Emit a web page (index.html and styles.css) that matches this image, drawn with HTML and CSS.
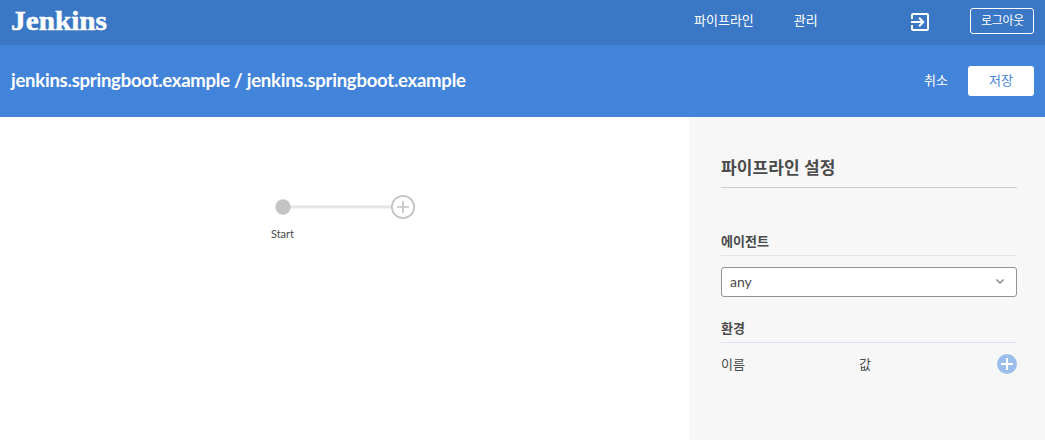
FILE: index.html
```html
<!DOCTYPE html>
<html lang="ko">
<head>
<meta charset="utf-8">
<title>Jenkins</title>
<link rel="stylesheet" href="styles.css">
</head>
<body>
<header class="topbar">
  <svg class="logo" width="100" height="34" viewBox="0 0 100 34" role="img" aria-label="Jenkins"><text x="0" y="22" textLength="96" lengthAdjust="spacingAndGlyphs">Jenkins</text></svg>
  <nav class="nav"><a>파이프라인</a><a>관리</a></nav>
  <svg class="exit" width="18" height="18" viewBox="0 0 18 18" fill="none" stroke="#fff" stroke-width="2"><path d="M1 6V2Q1 1 2 1H16Q17 1 17 2V16Q17 17 16 17H2Q1 17 1 16V12M0 9H12M8.1 4.8L12.3 9L8.1 13.2"/></svg>
  <button class="logout">로그아웃</button>
</header>
<section class="titlebar">
  <h1 class="title">jenkins.springboot.example / jenkins.springboot.example</h1>
  <a class="cancel">취소</a>
  <button class="save">저장</button>
</section>
<main class="editor">
  <section class="graph">
    <svg width="160" height="70" viewBox="0 0 160 70">
      <path d="M23 27H131" stroke="#e5e5e5" stroke-width="3"/>
      <circle cx="23" cy="27" r="7.7" fill="#c4c4c4"/>
      <circle cx="143" cy="27" r="11.1" fill="#fff" stroke="#c4c4c4" stroke-width="1.8"/>
      <path d="M137 27H149M143 21V33" stroke="#c4c4c4" stroke-width="1.7"/>
      <text class="stage" x="22.5" y="58" text-anchor="middle">Start</text>
    </svg>
  </section>
  <aside class="panel">
    <h2 class="heading">파이프라인 설정</h2>
    <h3 class="label agent">에이전트</h3>
    <div class="select"><span>any</span><svg width="10" height="8" viewBox="0 0 10 8" fill="none" stroke="#888" stroke-width="1.4"><path d="M1.3 1.5L5 5.1L8.7 1.5"/></svg></div>
    <h3 class="label env">환경</h3>
    <div class="columns"><span>이름</span><span>값</span>
      <svg width="20" height="20" viewBox="0 0 20 20"><circle cx="10" cy="10" r="10" fill="#9bbfea"/><path d="M4 10H16M10 4V16" stroke="#fff" stroke-width="2"/></svg>
    </div>
  </aside>
</main>
</body>
</html>
```
FILE: styles.css
```css
* { box-sizing: border-box; }
body { margin: 0; height: 440px; overflow: hidden; display: flex; flex-direction: column; background: #fff; color: #4a4a4a; font: 13px/20px Lato, "Noto Sans CJK KR", sans-serif; }
h1, h2, h3 { margin: 0; }
button { font: inherit; padding: 0; border-radius: 3px; }
.topbar { display: flex; height: 45px; padding: 8px 11px 0; background: #3a77c5; color: #fff; }
.logo { flex: none; overflow: visible; }
.logo text { font: bold 27px "Liberation Serif", serif; fill: #fff; stroke: #fff; stroke-width: .5px; }
.nav { display: flex; gap: 40px; margin: 2px 0 0 583px; width: 217px; flex: none; }
.exit { margin-top: 5px; flex: none; }
.logout { width: 64px; height: 26px; margin-left: auto; border: 1px solid #fff; background: none; color: #fff; font-size: 12px; line-height: 22px; letter-spacing: -.3px; padding-left: 1px; }
.titlebar { display: flex; align-items: center; height: 72px; padding: 0 11px; background: #4284da; color: #fff; }
.title { font-size: 18.5px; font-weight: 700; line-height: 24px; letter-spacing: -.24px; margin: -2px auto 0 0; white-space: nowrap; }
.cancel { margin: -2px 20px 0 0; }
.save { width: 66px; height: 30px; border: 0; background: #fff; color: #4284da; line-height: 18px; padding-bottom: 2px; }
.editor { display: flex; flex: 1; }
.graph { flex: 1; padding: 63px 0 0 260px; }
.stage { font: 11px Lato, sans-serif; fill: #4a4a4a; }
.panel { width: 356px; padding: 36px 28px 0 32px; background: #f7f7f7; }
.heading { height: 35px; border-bottom: 1px solid #c5cfda; font-size: 17px; line-height: 30px; letter-spacing: .1px; font-weight: 700; }
.label { border-bottom: 1px solid #e0e3e8; font-size: 13px; line-height: 18px; font-weight: 700; }
.agent { height: 24px; margin-top: 44px; }
.select { display: flex; align-items: center; justify-content: space-between; height: 30px; margin-top: 11px; padding: 0 11px 0 8px; border: 1px solid #949393; border-radius: 3px; background: #fff; font-size: 14px; }
.env { height: 24px; margin-top: 22px; border-color: #d9e2ef; }
.columns { display: grid; grid-template-columns: 138px 138px 20px; align-items: center; margin-top: 11px; }
```
